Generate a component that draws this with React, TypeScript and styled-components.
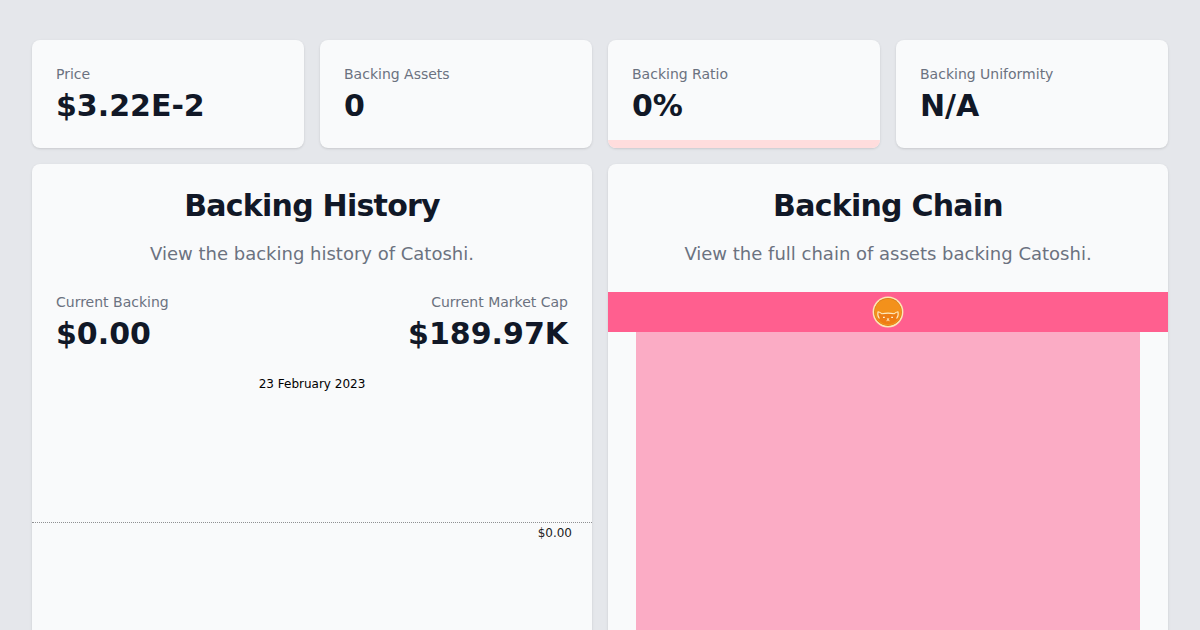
import React from 'react';
import styled, { createGlobalStyle } from 'styled-components';

const GlobalStyle = createGlobalStyle`
  *, *::before, *::after { box-sizing: border-box; }
  body {
    margin: 0;
    background: #e5e7eb;
    color: #111827;
    font-family: 'DejaVu Sans', sans-serif;
    line-height: 24px;
  }
`;

const Page = styled.main`
  display: flex;
  flex-direction: column;
  gap: 16px;
  padding: 40px 32px;
`;

const Stats = styled.div`
  display: grid;
  grid-template-columns: repeat(4, 1fr);
  gap: 16px;
`;

const Card = styled.section`
  position: relative;
  overflow: hidden;
  border-radius: 8px;
  background: #f9fafb;
  box-shadow: 0 1px 3px rgba(0, 0, 0, 0.1), 0 1px 2px -1px rgba(0, 0, 0, 0.1);
`;

const StatCard = styled(Card)`
  padding: 24px;
`;

const Figure = styled.dl<{ $end?: boolean }>`
  margin: 0;
  text-align: ${(p) => (p.$end ? 'right' : 'left')};
`;

const Label = styled.dt`
  color: #6b7280;
  font-size: 14px;
  line-height: 20px;
`;

const Value = styled.dd`
  margin: 4px 0 0;
  font-size: 30px;
  font-weight: 600;
  line-height: 36px;
`;

const RatioBar = styled.div`
  position: absolute;
  inset: auto 0 0;
  height: 8px;
  background: #ffdddd;
`;

const Panels = styled.div`
  display: grid;
  grid-template-columns: repeat(2, 1fr);
  gap: 16px;
`;

const Header = styled.header`
  padding: 24px;
  text-align: center;
`;

const Title = styled.h2`
  margin: 0;
  font-size: 30px;
  font-weight: 700;
  line-height: 36px;
  letter-spacing: -0.025em;
`;

const Subtitle = styled.p`
  margin: 16px 0 0;
  color: #6b7280;
  font-size: 18px;
  line-height: 28px;
`;

const Totals = styled.div`
  display: flex;
  justify-content: space-between;
  padding: 0 24px;
`;

const Chart = styled.figure`
  margin: 0;
  padding-top: 20px;
  font-size: 12px;
  color: #000;
`;

const ChartDate = styled.figcaption`
  text-align: center;
  line-height: 24px;
`;

const Plot = styled.div`
  height: 127px;
  border-bottom: 1px dotted #8f9092;
`;

const AxisLabel = styled.div`
  padding-right: 20px;
  color: #1c1c1c;
  text-align: right;
  line-height: 20px;
`;

const ChainHead = styled.div`
  display: flex;
  align-items: center;
  justify-content: center;
  height: 40px;
  background: #ff5f8f;
`;

const ChainBody = styled.div`
  height: 460px;
  margin: 0 5%;
  background: #fbacc5;
`;

const stats = [
  { label: 'Price', value: '$3.22E-2' },
  { label: 'Backing Assets', value: '0' },
  { label: 'Backing Ratio', value: '0%', bar: true },
  { label: 'Backing Uniformity', value: 'N/A' },
];

const CatoshiIcon = () => (
  <svg width="32" height="32" viewBox="0 0 32 32" role="img" aria-label="Catoshi">
    <circle cx="16" cy="16" r="15.4" fill="#fde6b4" />
    <circle cx="16" cy="16" r="13.9" fill="#d67a18" />
    <circle cx="16" cy="16" r="13.3" fill="#f3911b" />
    <path d="M5.5 16.5 L9 18 H23 L26.5 16.5 V22.5 A12.5 12.5 0 0 1 5.5 22.5Z" fill="#ee7d14" />
    <path
      d="M7.2 22.2 C5.8 20.6 5.6 18 6 15.8 C7.6 16 8.8 16.8 10 17.8 C13.8 17 18.2 17 22 17.8 C23.2 16.8 24.4 16 26 15.8 C26.4 18 26.2 20.6 24.8 22.2"
      fill="none"
      stroke="#fde9c0"
      strokeWidth="1.1"
      strokeLinecap="round"
      strokeLinejoin="round"
    />
    <path d="M11 21.4h1.8M19.2 21.4h1.8" stroke="#fff0cf" strokeWidth="1.2" />
    <path d="M15 22.8h2l-1 1.2zM14.4 24.8q1.100.2 1.600-.8q.5 1 1.600.8" fill="none" stroke="#fde9c0" strokeWidth=".8" />
  </svg>
);

export default function App() {
  return (
    <>
      <GlobalStyle />
      <Page>
        <Stats>
          {stats.map((s) => (
            <StatCard key={s.label}>
              <Figure>
                <Label>{s.label}</Label>
                <Value>{s.value}</Value>
              </Figure>
              {s.bar && <RatioBar />}
            </StatCard>
          ))}
        </Stats>
        <Panels>
          <Card>
            <Header>
              <Title>Backing History</Title>
              <Subtitle>View the backing history of Catoshi.</Subtitle>
            </Header>
            <Totals>
              <Figure>
                <Label>Current Backing</Label>
                <Value>$0.00</Value>
              </Figure>
              <Figure $end>
                <Label>Current Market Cap</Label>
                <Value>$189.97K</Value>
              </Figure>
            </Totals>
            <Chart>
              <ChartDate>23 February 2023</ChartDate>
              <Plot />
              <AxisLabel>$0.00</AxisLabel>
            </Chart>
          </Card>
          <Card>
            <Header>
              <Title>Backing Chain</Title>
              <Subtitle>View the full chain of assets backing Catoshi.</Subtitle>
            </Header>
            <ChainHead>
              <CatoshiIcon />
            </ChainHead>
            <ChainBody />
          </Card>
        </Panels>
      </Page>
    </>
  );
}
